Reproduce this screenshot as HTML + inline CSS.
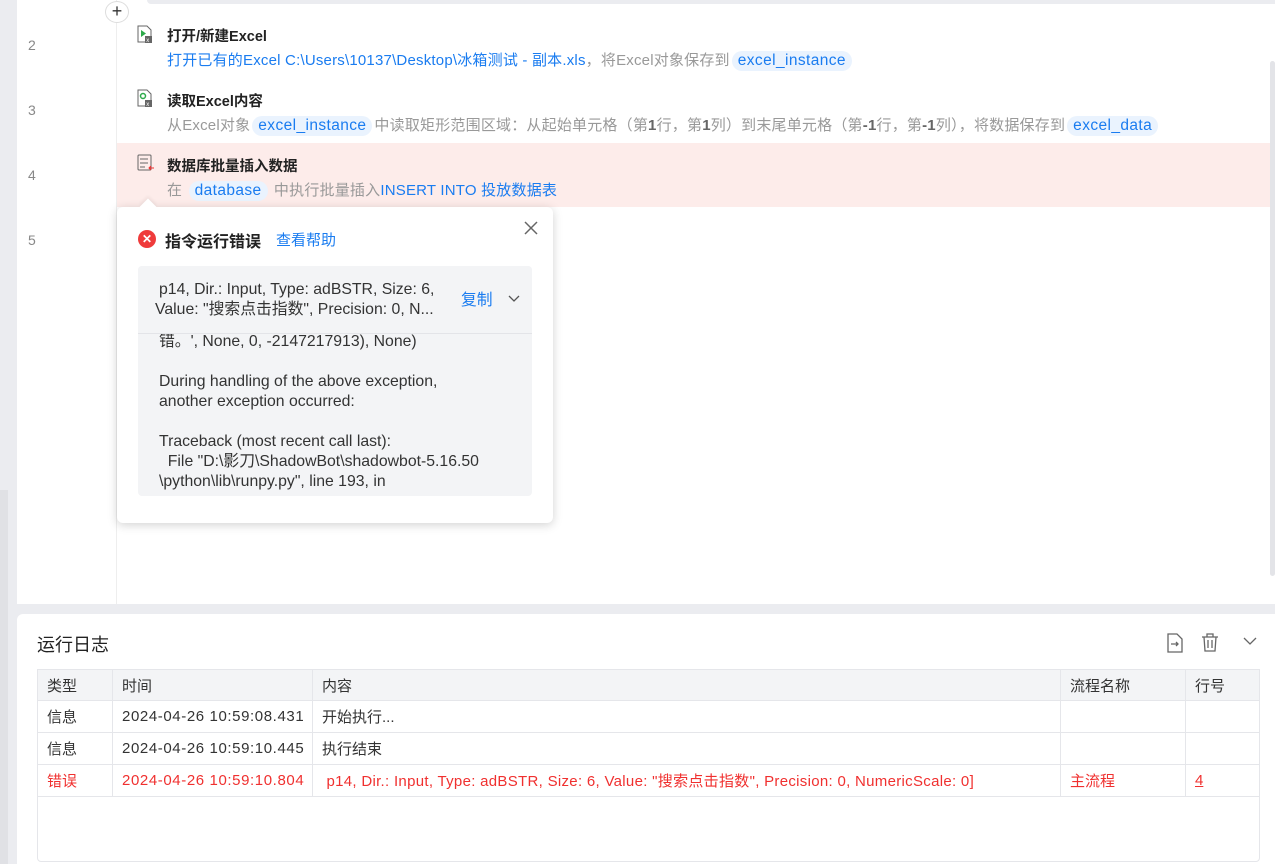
<!DOCTYPE html>
<html><head><meta charset="utf-8"><style>
*{box-sizing:border-box;margin:0;padding:0}
body{width:1275px;height:864px;overflow:hidden;background:#ebecf0;font-family:"Liberation Sans","Noto Sans CJK SC",sans-serif;position:relative;color:#222}
.abs{position:absolute}
.main{left:17px;top:0;width:1258px;height:604px;background:#fff}
.ln{position:absolute;left:28px;font-size:14px;color:#888}
.title{position:absolute;left:167px;font-size:14.5px;font-weight:bold;color:#222}
.desc{position:absolute;left:167px;font-size:15px;color:#999;white-space:nowrap;letter-spacing:.2px}
.blue{color:#1a7cf0}
.tag{display:inline-block;background:#eaf3fe;color:#1a7cf0;border-radius:10px;padding:0 6px;font-size:15.5px;line-height:20px;margin:0 2px;letter-spacing:.4px}
.ico{position:absolute;left:137px;width:16px;height:18px}
.log{left:17px;top:614px;width:1258px;height:250px;background:#fff;border-radius:6px 0 0 0}
table{border-collapse:collapse;position:absolute;left:37px;top:669px;width:1223px;font-size:15px;table-layout:fixed}
td{border:1px solid #e5e6ea;height:32px;padding-left:9px;color:#333;white-space:nowrap;overflow:hidden}
tr.h td{background:#f3f4f6;height:31px}
tr.e td{color:#f0302f}
</style></head><body>
<div class="abs" style="left:0;top:490px;width:8px;height:374px;background:#e0e1e5"></div>
<div class="abs main"></div>
<div class="abs" style="left:147px;top:0;width:1128px;height:4px;background:#ebecf0;border-radius:0 0 0 6px"></div>
<div class="abs" style="left:116px;top:0;width:1px;height:604px;background:#eee"></div>
<div class="abs" style="left:1270px;top:61px;width:5px;height:515px;background:#e3e4e8;border-radius:3px"></div>
<div class="abs" style="left:105px;top:1px;width:24px;height:22px;border:1px solid #ddd;border-radius:50%;background:#fff;text-align:center;font-size:18px;line-height:18px;color:#333">+</div>

<div class="ln" style="top:37px">2</div>
<svg class="ico" style="top:25px" viewBox="0 0 16 18"><path d="M1 1h9l4 4v12H1z" fill="#fff" stroke="#666"/><path d="M4 5l5 3.5-5 3.5z" fill="#2daa4a"/><rect x="8" y="11" width="7" height="7" fill="#666"/><text x="9.3" y="17" font-size="6" fill="#fff">x</text></svg>
<div class="title" style="top:25px">打开/新建Excel</div>
<div class="desc blue" style="top:49px">打开已有的Excel C:\Users\10137\Desktop\冰箱测试 - 副本.xls<span style="color:#999">，将Excel对象保存到</span><span class="tag">excel_instance</span></div>

<div class="ln" style="top:102px">3</div>
<svg class="ico" style="top:89px" viewBox="0 0 16 18"><path d="M1 1h9l4 4v12H1z" fill="#fff" stroke="#666"/><circle cx="6" cy="7" r="2.5" fill="none" stroke="#2daa4a" stroke-width="1.5"/><rect x="8" y="11" width="7" height="7" fill="#666"/><text x="9.3" y="17" font-size="6" fill="#fff">x</text></svg>
<div class="title" style="top:90px">读取Excel内容</div>
<div class="desc" style="top:114px">从Excel对象<span class="tag">excel_instance</span>中读取矩形范围区域：从起始单元格（第<b style="color:#666">1</b>行，第<b style="color:#666">1</b>列）到末尾单元格（第<b style="color:#666">-1</b>行，第<b style="color:#666">-1</b>列），将数据保存到<span class="tag">excel_data</span></div>

<div class="abs" style="left:117px;top:143px;width:1153px;height:64px;background:#fdecea"></div>
<div class="ln" style="top:167px">4</div>
<svg class="ico" style="top:154px;width:18px" viewBox="0 0 18 18"><rect x="1" y="1" width="13" height="15" rx="1" fill="none" stroke="#666"/><path d="M3 5h8M3 9h8M3 13h5" stroke="#666"/><path d="M17 14h-5m2-2l-2 2 2 2" stroke="#f0302f" fill="none"/></svg>
<div class="title" style="top:155px">数据库批量插入数据</div>
<div class="desc" style="top:179px">在 <span class="tag">database</span> 中执行批量插入<span class="blue">INSERT INTO 投放数据表</span></div>
<div class="ln" style="top:232px">5</div>

<div class="abs" style="left:117px;top:207px;width:436px;height:316px;background:#fff;border-radius:6px;box-shadow:0 2px 10px rgba(0,0,0,.18)"></div>
<div class="abs" style="left:142px;top:201px;width:12px;height:12px;background:#fff;transform:rotate(45deg);box-shadow:-2px -2px 3px rgba(0,0,0,.05)"></div>
<div class="abs" style="left:138px;top:230px;width:18px;height:18px;border-radius:50%;background:#ef3b3b;color:#fff;font-size:12px;text-align:center;line-height:18px;font-weight:bold">✕</div>
<div class="abs" style="left:165px;top:228px;font-size:16px;font-weight:bold;color:#222">指令运行错误</div>
<div class="abs" style="left:276px;top:229px;font-size:15px;color:#1a7cf0">查看帮助</div>
<svg class="abs" style="left:524px;top:221px" width="14" height="14"><path d="M1 1l12 12M13 1L1 13" stroke="#666" stroke-width="1.5"/></svg>
<div class="abs" style="left:138px;top:266px;width:394px;height:230px;background:#f3f4f6;border-radius:4px;overflow:hidden;font-size:15.8px;color:#333;line-height:20px">
 <div style="position:absolute;left:0;top:0;width:394px;height:68px;border-bottom:1px solid #e3e4e8;background:#f3f4f6;z-index:2">
  <div style="position:absolute;left:21px;top:14px;white-space:nowrap">p14, Dir.: Input, Type: adBSTR, Size: 6,</div>
  <div style="position:absolute;left:17px;top:34px;white-space:nowrap">Value: "搜索点击指数", Precision: 0, N...</div>
  <div style="position:absolute;left:323px;top:25px;color:#1a7cf0">复制</div>
  <svg style="position:absolute;left:370px;top:29px" width="12" height="8"><path d="M1 1l5 5 5-5" stroke="#555" fill="none" stroke-width="1.3"/></svg>
 </div>
 <div style="position:absolute;left:21px;top:66px;white-space:pre">错。', None, 0, -2147217913), None)

During handling of the above exception,
another exception occurred:

Traceback (most recent call last):
  File "D:\影刀\ShadowBot\shadowbot-5.16.50
\python\lib\runpy.py", line 193, in</div>
</div>

<div class="abs log"></div>
<div class="abs" style="left:37px;top:631px;font-size:18px;color:#222">运行日志</div>
<svg class="abs" style="left:1166px;top:633px" width="18" height="20"><path d="M2 1h9l5 5v13H2z" fill="none" stroke="#666" stroke-width="1.3"/><path d="M5 11h7m-2-2l2 2-2 2" stroke="#666" fill="none" stroke-width="1.3"/></svg>
<svg class="abs" style="left:1201px;top:633px" width="18" height="19"><path d="M1 4h16M6 4V1h6v3M3 4l1 14h10l1-14M7 7v8M11 7v8" stroke="#666" fill="none" stroke-width="1.3"/></svg>
<svg class="abs" style="left:1243px;top:637px" width="14" height="9"><path d="M1 1l6 6 6-6" stroke="#666" fill="none" stroke-width="1.3"/></svg>
<div class="abs" style="left:37px;top:669px;width:1223px;height:193px;border:1px solid #e5e6ea;border-radius:4px"></div>
<table>
<colgroup><col style="width:75px"><col style="width:200px"><col style="width:748px"><col style="width:125px"><col></colgroup>
<tr class="h"><td>类型</td><td>时间</td><td>内容</td><td>流程名称</td><td>行号</td></tr>
<tr><td>信息</td><td style="letter-spacing:.6px">2024-04-26 10:59:08.431</td><td>开始执行...</td><td></td><td></td></tr>
<tr><td>信息</td><td style="letter-spacing:.6px">2024-04-26 10:59:10.445</td><td>执行结束</td><td></td><td></td></tr>
<tr class="e"><td>错误</td><td style="letter-spacing:.6px">2024-04-26 10:59:10.804</td><td style="letter-spacing:.3px">&nbsp;p14, Dir.: Input, Type: adBSTR, Size: 6, Value: "搜索点击指数", Precision: 0, NumericScale: 0]</td><td>主流程</td><td><u>4</u></td></tr>
</table>
</body></html>
